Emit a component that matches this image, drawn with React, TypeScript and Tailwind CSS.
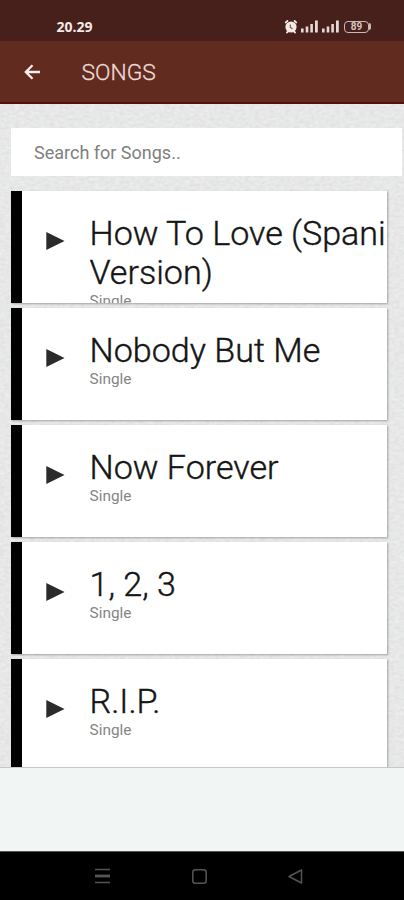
import React from 'react';

interface Song {
  title: string[];
  type: string;
}

const songs: Song[] = [
  { title: ['How To Love (Spanish', 'Version)'], type: 'Single' },
  { title: ['Nobody But Me'], type: 'Single' },
  { title: ['Now Forever'], type: 'Single' },
  { title: ['1, 2, 3'], type: 'Single' },
  { title: ['R.I.P.'], type: 'Single' },
];

const SignalIcon = () => (
  <svg width="18" height="13" viewBox="0 0 18 13" fill="#e6d9d5">
    <rect x="0" y="8.5" width="2.6" height="4" />
    <rect x="4.7" y="6.5" width="2.6" height="6" />
    <rect x="9.3" y="4" width="2.6" height="8.5" />
    <rect x="14" y="0.5" width="2.8" height="12" />
  </svg>
);

const AlarmIcon = () => (
  <svg width="14" height="15" viewBox="0 0 14 15" fill="none">
    <circle cx="7" cy="8" r="5.6" fill="#f4e9e5" />
    <path d="M1.8 3.4 3.4 2M12.2 3.4 10.6 2M3 13.5l1-1.2M11 13.5l-1-1.2" stroke="#f4e9e5" strokeWidth="1.9" strokeLinecap="round" />
    <path d="M6.3 5.5v3l2.3 1.3" stroke="#765049" strokeWidth="1.1" />
  </svg>
);

const StatusBar = () => (
  <div className="flex h-[41px] shrink-0 items-start bg-[#48201b] pl-[56.5px] pr-[33px] pt-[19px]">
    <span className="font-['Open_Sans',sans-serif] text-[14px] font-bold leading-[15px] text-[#f3e9e6]">20.29</span>
    <div className="ml-auto flex items-center">
      <AlarmIcon />
      <div className="ml-[3px] flex gap-[3px]">
        <SignalIcon />
        <SignalIcon />
      </div>
      <div className="ml-[4px] flex h-[12px] w-[25px] items-center justify-center rounded-[4px] border-[1.5px] border-[#cbb8b3] text-[10px] font-bold leading-none text-[#d5c5c0]">
        89
      </div>
      <div className="h-[7px] w-[2px] rounded-r bg-[#cbb8b3]" />
    </div>
  </div>
);

const Header = () => (
  <header className="flex h-[63px] shrink-0 items-center border-b-2 border-[#5b0d0b] bg-[#612b1f] pl-[24px]">
    <svg width="17" height="16" viewBox="0 0 17 16" fill="none" stroke="#f7efec" strokeWidth="2.3">
      <path d="M8.5 1.2 1.8 8l6.7 6.8M2 8h14" />
    </svg>
    <h1 className="ml-[40.5px] mt-[3px] text-[22.8px] font-light leading-[26px] text-[#ecdad5] [-webkit-text-stroke:0.3px]">SONGS</h1>
  </header>
);

// Faint paper grain behind the list
const PaperTexture = () => (
  <svg className="absolute inset-0 h-full w-full" aria-hidden="true">
    <filter id="grain" x="0" y="0" width="100%" height="100%" colorInterpolationFilters="sRGB">
      <feTurbulence type="fractalNoise" baseFrequency="0.2 0.35" numOctaves="3" seed="4" />
      <feColorMatrix values="0.08 0 0 0 0.864  0.08 0 0 0 0.866  0.08 0 0 0 0.866  0 0 0 0 1" />
    </filter>
    <rect width="100%" height="100%" filter="url(#grain)" />
  </svg>
);

const SongCard: React.FC<{ song: Song }> = ({ song }) => (
  <li className="flex h-[112px] shrink-0 overflow-hidden border-l-[11px] border-black bg-white shadow-[1px_1px_2px_rgba(0,0,0,0.3)]">
    <svg className="ml-[24px] mt-[41px] shrink-0" width="19" height="18" viewBox="0 0 19 18">
      <path d="M0.3 0 18.5 9 0.3 18Z" fill="#2b2b2b" />
    </svg>
    <div className="ml-[24.5px] mr-[1.5px] min-w-0 flex-1 overflow-hidden pt-[22.5px]">
      {song.title.map((line) => (
        <p key={line} className="whitespace-nowrap text-[34.1px] font-light leading-[39px] text-[#151515] [-webkit-text-stroke:0.4px]">
          {line}
        </p>
      ))}
      <p className="mt-[0.5px] text-[15.4px] leading-[18px] text-[#858585]">{song.type}</p>
    </div>
  </li>
);

const NavBar = () => (
  <nav className="flex h-[49px] shrink-0 items-center justify-between border-t border-[#555] bg-black pl-[95px] pr-[101px]">
    <svg width="15" height="16" viewBox="0 0 15 16" stroke="#555">
      <path d="M0 1.5h15M0 14.5h15" strokeWidth="1.6" />
      <path d="M0 8h15" strokeWidth="2.8" />
    </svg>
    <svg width="15" height="15" viewBox="0 0 15 15" fill="none" stroke="#555" strokeWidth="1.5">
      <rect x="0.8" y="0.8" width="13.4" height="13.4" rx="2.5" />
    </svg>
    <svg width="15" height="15" viewBox="0 0 15 15" fill="none" stroke="#555" strokeWidth="1.5" strokeLinejoin="round">
      <path d="M1 7.5 13.5 1v13Z" />
    </svg>
  </nav>
);

export default function App() {
  return (
    <div className="flex h-[900px] w-[404px] flex-col overflow-hidden bg-[#f1f6f5] font-[Roboto,sans-serif]">
      <StatusBar />
      <Header />
      <main className="relative h-[663px] shrink-0 overflow-hidden bg-[#e6e7e7]">
        <PaperTexture />
        <div className="relative flex flex-col pl-[11px] pt-[24px]">
          <input
            type="text"
            placeholder="Search for Songs.."
            className="h-[48px] w-[391px] bg-white px-[23px] text-[18px] placeholder:text-[#808080] outline-none"
          />
          <ul className="mt-[15px] flex w-[376px] flex-col gap-[5px]">
            {songs.map((song) => (
              <SongCard key={song.title[0]} song={song} />
            ))}
          </ul>
        </div>
      </main>
      <div className="flex-1 border-t border-[#c4c8c7]" />
      <NavBar />
    </div>
  );
}
